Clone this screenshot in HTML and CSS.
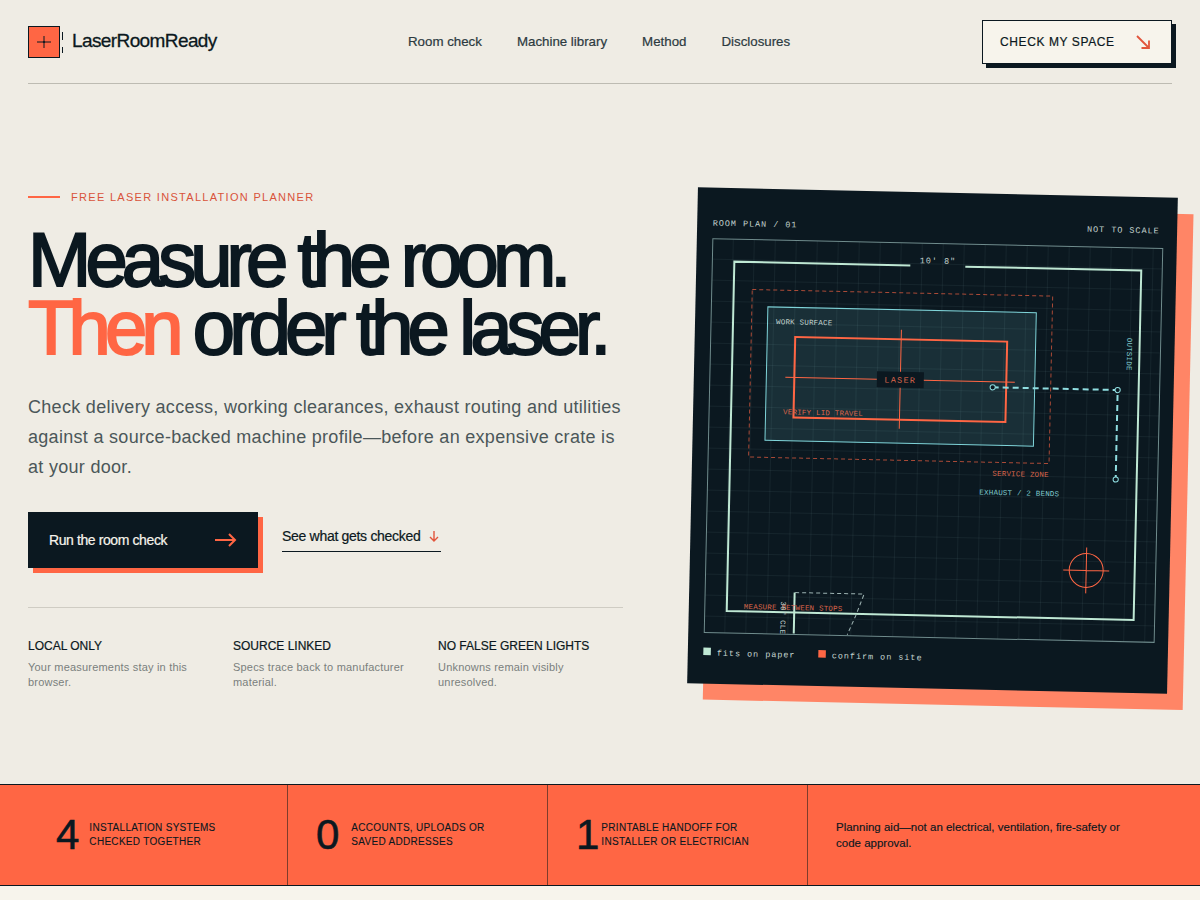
FILE: index.html
```html
<!DOCTYPE html>
<html lang="en">
<head>
<meta charset="UTF-8" />
<meta name="viewport" content="width=device-width, initial-scale=1" />
<title>LaserRoomReady</title>
<link rel="stylesheet" href="styles.css">
</head>
<body>
<div class="top-area">
  <header class="site-header">
    <a class="brand" href="#">
      <span class="brand-mark"><svg width="14" height="14" viewBox="0 0 14 14"><path d="M0 7H14M7 1V13" stroke="#0b1820" stroke-width="1"/><circle cx="7" cy="7" r="1.1" fill="#0b1820"/></svg></span>
      <span class="brand-name">LaserRoomReady</span>
    </a>
    <nav class="nav-links">
      <a href="#">Room check</a>
      <a href="#">Machine library</a>
      <a href="#">Method</a>
      <a href="#">Disclosures</a>
    </nav>
    <a class="header-btn" href="#">
      <span>CHECK MY SPACE</span>
      <svg width="16" height="16" viewBox="0 0 16 16" fill="none" stroke="#e2553c" stroke-width="1.8"><path d="M2 2L14 14M14 6.5V14H6.5"/></svg>
    </a>
  </header>

  <main class="hero">
    <section class="hero-copy">
      <div class="eyebrow"><span class="eyebrow-line"></span>FREE LASER INSTALLATION PLANNER</div>
      <h1>Measure the room.<br><span class="accent">Then</span> order the laser.</h1>
      <p class="lead">Check delivery access, working clearances, exhaust routing and utilities against a source-backed machine profile—before an expensive crate is at your door.</p>
      <div class="actions">
        <a class="cta" href="#">
          <span>Run the room check</span>
          <svg width="22" height="14" viewBox="0 0 22 14" fill="none" stroke="#ff6644" stroke-width="2"><path d="M0 7H20M14 1L20 7L14 13"/></svg>
        </a>
        <a class="see-link" href="#">
          <span>See what gets checked</span>
          <svg width="10" height="12" viewBox="0 0 10 12" fill="none" stroke="#e2553c" stroke-width="1.4"><path d="M5 1V11M1 7L5 11L9 7"/></svg>
        </a>
      </div>
      <div class="features">
        <div class="feature">
          <h3>LOCAL ONLY</h3>
          <p>Your measurements stay in this browser.</p>
        </div>
        <div class="feature">
          <h3>SOURCE LINKED</h3>
          <p>Specs trace back to manufacturer material.</p>
        </div>
        <div class="feature">
          <h3>NO FALSE GREEN LIGHTS</h3>
          <p>Unknowns remain visibly unresolved.</p>
        </div>
      </div>
    </section>

    <aside class="plan-card">
      <svg class="plan" width="480" height="496" viewBox="0 0 480 496">
        <defs>
          <pattern id="cell" x="16" y="51" width="21" height="21" patternUnits="userSpaceOnUse">
            <path d="M21 0V21M0 21H21" fill="none" stroke="#9fd0d4" stroke-opacity="0.13" stroke-width="1"/>
          </pattern>
        </defs>
        <text class="t-head" x="15.5" y="38">ROOM PLAN / 01</text>
        <text class="t-head" x="462.5" y="36" text-anchor="end">NOT TO SCALE</text>

        <rect x="16" y="51" width="450" height="394" fill="url(#cell)" stroke="#6f8b8c" stroke-width="1"/>

        <rect x="72.5" y="118" width="268.5" height="133.5" fill="#7fd4d9" fill-opacity="0.13" stroke="#7fd4d9" stroke-width="1"/>
        <rect x="56.5" y="101" width="300.5" height="167.5" fill="none" stroke="#ff6644" stroke-opacity="0.65" stroke-width="1" stroke-dasharray="4 3"/>

        <path class="wall" d="M214 73.5H38V423H445V73.5H269"/>
        <path class="wall" d="M105.5 403V444"/>
        <path d="M106 403H175L167 425L159 444" fill="none" stroke="#9db3b2" stroke-width="1" stroke-dasharray="4 3"/>
        <text class="t-head" x="241.5" y="71" text-anchor="middle">10' 8"</text>

        <rect x="100.5" y="147.5" width="212" height="80.5" fill="none" stroke="#ff6644" stroke-width="2"/>
        <path d="M91.5 188H321M206.5 138V237" stroke="#ff6644" stroke-width="1"/>
        <rect x="183" y="180" width="47" height="16" fill="#0b1820"/>
        <text class="t-laser" x="206.5" y="191" text-anchor="middle">LASER</text>

        <path d="M299 193.5H424V283" fill="none" stroke="#8fdde0" stroke-width="2" stroke-dasharray="6 4"/>
        <circle class="stop" cx="299" cy="193.5" r="2.6"/>
        <circle class="stop" cx="424" cy="193.5" r="2.6"/>
        <circle class="stop" cx="424" cy="283" r="2.6"/>

        <circle cx="396.5" cy="374.5" r="17" fill="none" stroke="#ff6644" stroke-width="1"/>
        <path d="M373.5 374.5H419.5M396.5 351.5V397.5" stroke="#ff6644" stroke-width="1"/>

        <text class="t-small t-pale" x="81" y="135">WORK SURFACE</text>
        <text class="t-small t-coral" x="90" y="225">VERIFY LID TRAVEL</text>
        <text class="t-small t-cyan" transform="translate(432.5 141) rotate(90)">OUTSIDE</text>
        <text class="t-small t-coral" x="357" y="282" text-anchor="end">SERVICE ZONE</text>
        <text class="t-small t-cyan" x="288" y="301">EXHAUST / 2 BENDS</text>
        <text class="t-small t-coral" x="55" y="420.5">MEASURE BETWEEN STOPS</text>
        <text class="t-small t-pale" transform="translate(92 412) rotate(90)">36" CLE</text>

        <rect x="15.5" y="460" width="7.5" height="7.5" fill="#bfe8d4"/>
        <text class="t-head" x="29" y="468">fits on paper</text>
        <rect x="130.5" y="460" width="7.5" height="7.5" fill="#ff6644"/>
        <text class="t-head" x="144" y="468">confirm on site</text>
      </svg>
    </aside>
  </main>
</div>

<section class="stats">
  <div class="stat stat-first">
    <span class="stat-num">4</span>
    <span class="stat-label">INSTALLATION SYSTEMS<br>CHECKED TOGETHER</span>
  </div>
  <div class="stat stat-zero">
    <span class="stat-num">0</span>
    <span class="stat-label">ACCOUNTS, UPLOADS OR<br>SAVED ADDRESSES</span>
  </div>
  <div class="stat stat-one">
    <span class="stat-num">1</span>
    <span class="stat-label">PRINTABLE HANDOFF FOR<br>INSTALLER OR ELECTRICIAN</span>
  </div>
  <div class="stat stat-note">
    <p>Planning aid—not an electrical, ventilation, fire-safety or code approval.</p>
  </div>
</section>
</body>
</html>
```

FILE: styles.css
```css
* {
  margin: 0;
  padding: 0;
  box-sizing: border-box;
}
html, body {
  height: 100%;
}
body {
  font-family: "Liberation Sans", Arial, sans-serif;
  background: #f7f4ec;
  color: #0b1820;
  overflow: hidden;
}
a {
  color: inherit;
  text-decoration: none;
}
.top-area {
  background: #efece4;
  height: 784px;
  padding: 0 28px;
}

/* header */
.site-header {
  height: 84px;
  display: flex;
  align-items: center;
  justify-content: space-between;
  border-bottom: 1px solid #bdbbb2;
  position: relative;
}
.brand {
  display: flex;
  align-items: center;
  gap: 12px;
  margin-top: -1px;
}
.brand-mark {
  width: 32px;
  height: 32px;
  margin-top: 2px;
  background: #ff6644;
  border: 1px solid #0b1820;
  display: flex;
  align-items: center;
  justify-content: center;
  position: relative;
}
.brand-mark::after {
  content: "";
  position: absolute;
  right: -4px;
  top: 5px;
  width: 1px;
  height: 21px;
  background: linear-gradient(#0b1820 0 8px, transparent 8px 15px, #0b1820 15px 21px);
}
.brand-name {
  font-size: 19px;
  letter-spacing: -0.6px;
  -webkit-text-stroke: 0.3px #0b1820;
}
.nav-links {
  display: flex;
  gap: 35px;
  font-size: 13.3px;
  color: #2c3a3f;
  -webkit-text-stroke: 0.2px #2c3a3f;
  position: absolute;
  left: 380px;
  top: 34px;
}
.header-btn {
  width: 190px;
  height: 44px;
  background: #f7f4ec;
  border: 1px solid #0b1820;
  box-shadow: 4px 4px 0 #0b1820;
  display: flex;
  align-items: center;
  justify-content: space-between;
  padding: 0 20px 0 17px;
  font-size: 12px;
  letter-spacing: 0.6px;
  -webkit-text-stroke: 0.2px #0b1820;
}

/* hero */
.hero {
  height: 700px;
  padding-top: 14px;
  display: grid;
  grid-template-columns: 595px 480px;
  justify-content: space-between;
  align-items: center;
}
.hero-copy {
  padding-bottom: 1px;
}
.eyebrow {
  display: flex;
  align-items: center;
  gap: 11px;
  font-size: 11px;
  letter-spacing: 1.3px;
  color: #d9533a;
}
.eyebrow-line {
  width: 32px;
  height: 2px;
  background: #ff6644;
}
h1 {
  font-size: 76px;
  line-height: 68.4px;
  font-weight: 400;
  letter-spacing: -5.9px;
  -webkit-text-stroke: 2px #0b1820;
  margin-top: 23px;
  white-space: nowrap;
}
.accent {
  color: #ff6644;
  -webkit-text-stroke-color: #ff6644;
}
.lead {
  margin-top: 30px;
  font-size: 18px;
  line-height: 30px;
  letter-spacing: 0.3px;
  color: #4b5759;
}
.actions {
  display: flex;
  align-items: flex-start;
  gap: 24px;
  margin-top: 30px;
}
.cta {
  width: 230px;
  height: 56px;
  background: #0b1820;
  color: #f7f4ec;
  box-shadow: 5px 5px 0 #ff6644;
  display: flex;
  align-items: center;
  justify-content: space-between;
  padding: 0 21px;
  font-size: 14px;
  letter-spacing: -0.4px;
  -webkit-text-stroke: 0.2px #f7f4ec;
}
.see-link {
  display: flex;
  align-items: center;
  gap: 9px;
  width: 159px;
  height: 40px;
  padding-top: 8px;
  border-bottom: 1px solid #0b1820;
  font-size: 14px;
  white-space: nowrap;
  -webkit-text-stroke: 0.2px #0b1820;
  letter-spacing: -0.3px;
}
.features {
  margin-top: 39px;
  padding-top: 31px;
  border-top: 1px solid #cfccc3;
  display: grid;
  grid-template-columns: repeat(3, 1fr);
  gap: 20px;
}
.feature h3 {
  font-size: 12px;
  font-weight: 400;
  line-height: 15px;
  -webkit-text-stroke: 0.2px #0b1820;
}
.feature p {
  margin-top: 6px;
  font-size: 11px;
  line-height: 15px;
  letter-spacing: 0.2px;
  color: #7a7f7d;
}

/* room plan */
.plan-card {
  width: 480px;
  height: 496px;
  background: #0b1820;
  box-shadow: 16px 16px 0 #ff8566;
  transform: translate(0.5px, -0.5px) rotate(1.25deg);
}
.plan {
  display: block;
}
.plan text {
  font-family: "Liberation Mono", monospace;
}
.wall {
  fill: none;
  stroke: #bfe8d4;
  stroke-width: 2;
}
.stop {
  fill: #0b1820;
  stroke: #8fdde0;
  stroke-width: 1;
}
.t-head {
  font-size: 8.5px;
  letter-spacing: 0.95px;
  fill: #c3d3ce;
}
.t-laser {
  font-size: 8.5px;
  letter-spacing: 1.3px;
  fill: #d8644a;
}
.t-small {
  font-size: 7.5px;
  letter-spacing: 0.2px;
}
.t-pale {
  fill: #c3d3ce;
}
.t-coral {
  fill: #d8644a;
}
.t-cyan {
  fill: #7fc9cd;
}

/* stats strip */
.stats {
  height: 102px;
  background: #ff6644;
  border-top: 1px solid #0b1820;
  border-bottom: 1px solid #0b1820;
  display: grid;
  grid-template-columns: 288px 260px 260px 1fr;
}
.stat {
  display: flex;
  align-items: center;
  gap: 10px;
  padding-left: 28px;
  border-right: 1px solid #7d3c2c;
}
.stat-first {
  padding-left: 56px;
}
.stat-zero {
  gap: 12px;
}
.stat-one {
  gap: 2px;
}
.stat-num {
  font-size: 42px;
  line-height: 1;
  color: #0b1820;
  -webkit-text-stroke: 0.6px #0b1820;
}
.stat-label {
  font-size: 10px;
  line-height: 14px;
  letter-spacing: 0.3px;
  color: #0b1820;
  -webkit-text-stroke: 0.1px #0b1820;
}
.stat-note {
  border-right: none;
  padding-right: 70px;
}
.stat-note p {
  font-size: 11.5px;
  line-height: 16px;
  -webkit-text-stroke: 0.15px #0b1820;
  color: #0b1820;
}
```
